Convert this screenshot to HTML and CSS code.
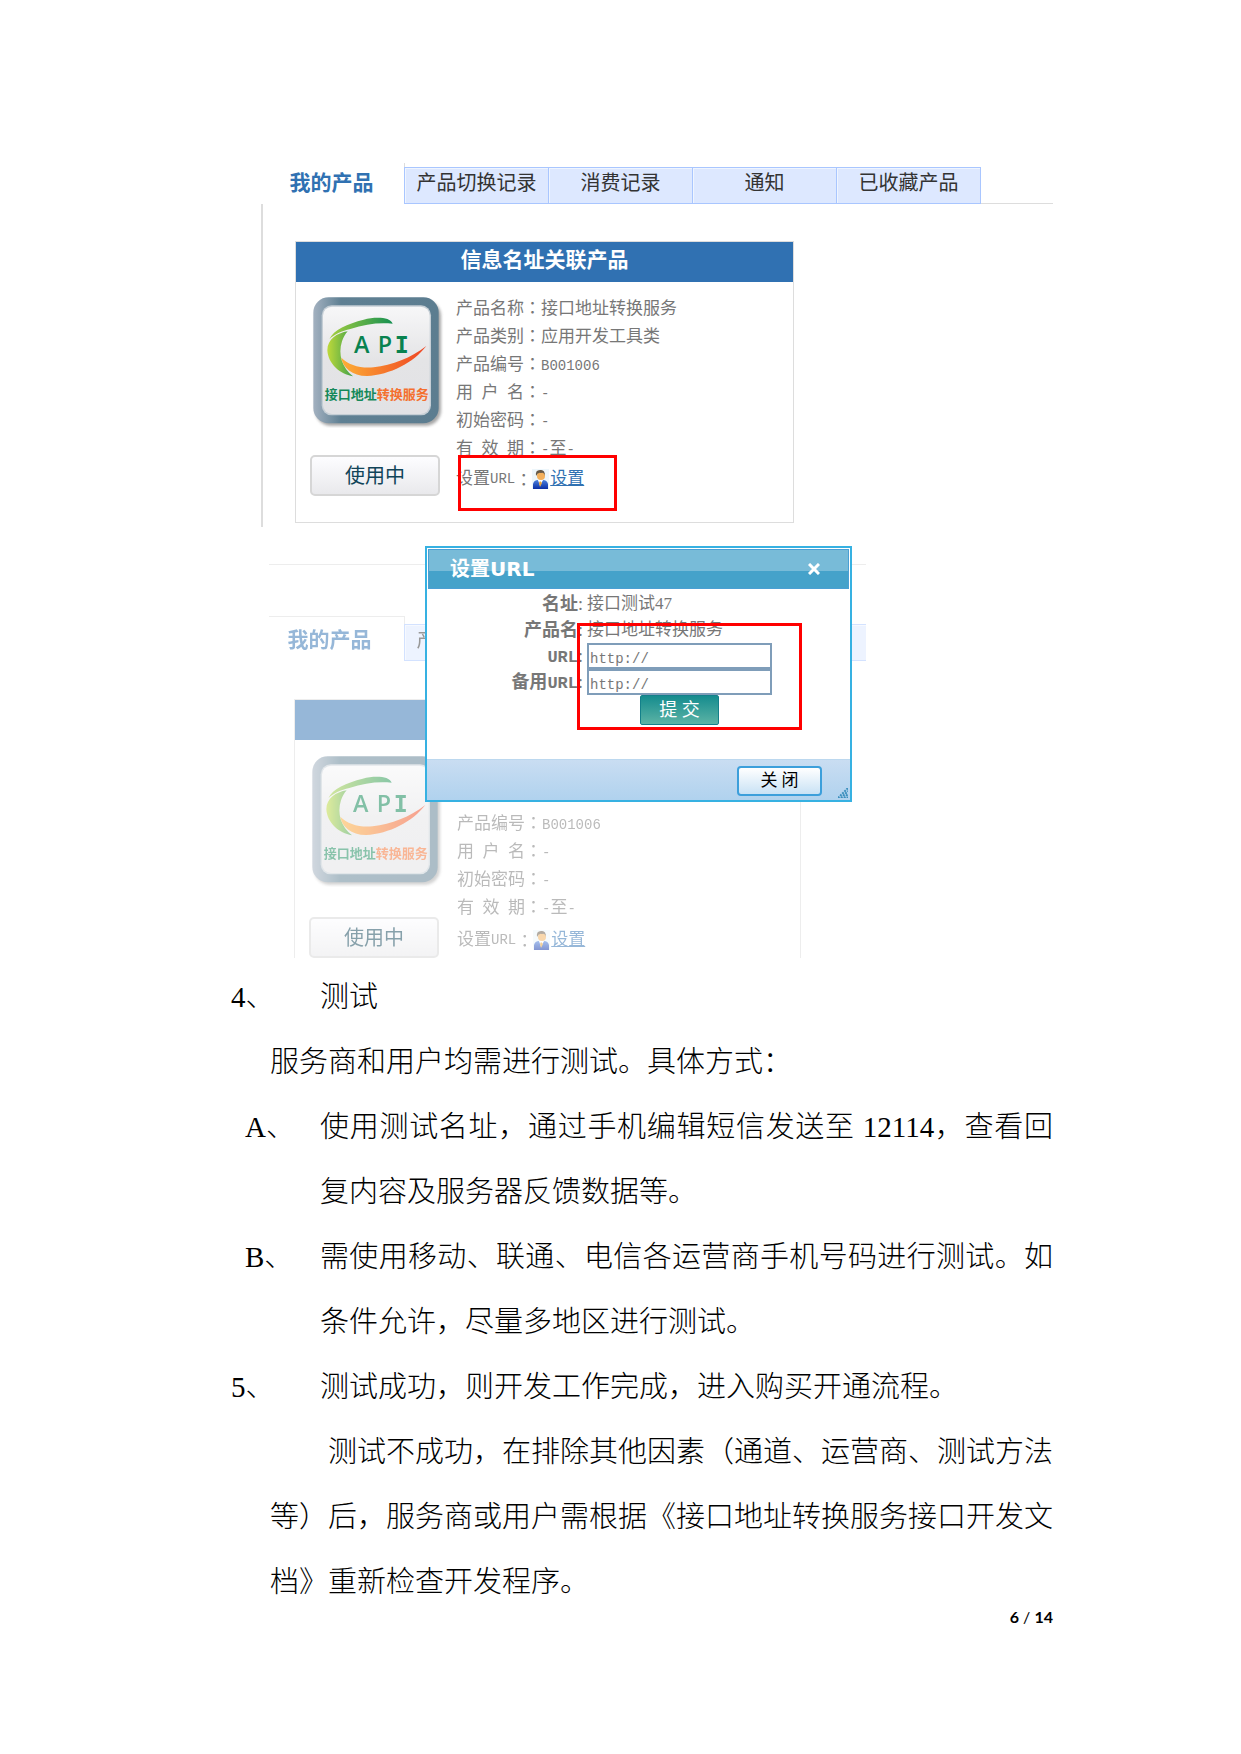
FILE: index.html
```html
<!DOCTYPE html>
<html lang="zh-CN">
<head>
<meta charset="utf-8">
<title>接口地址转换服务</title>
<link rel="stylesheet" href="styles.css">
</head>
<body>
<svg class="defs" aria-hidden="true">
  <defs>
    <linearGradient id="frame" x1="0" y1="0" x2="1" y2="0"><stop offset="0" stop-color="#a3b1c0"/><stop offset=".22" stop-color="#5f8093"/><stop offset="1" stop-color="#5c7d90"/></linearGradient>
    <linearGradient id="face" x1="0" y1="0" x2="0" y2="1"><stop offset="0" stop-color="#f7f7f8"/><stop offset=".5" stop-color="#e4e4e6"/><stop offset="1" stop-color="#e2e2e5"/></linearGradient>
    <linearGradient id="leaf" x1="0" y1="0" x2="1" y2="0"><stop offset="0" stop-color="#a5cf3e"/><stop offset="1" stop-color="#159052"/></linearGradient>
    <linearGradient id="stem" x1="0" y1="0" x2="1" y2="0"><stop offset="0" stop-color="#bfd93a"/><stop offset="1" stop-color="#3ea04a"/></linearGradient>
    <linearGradient id="flame" x1="0" y1="0" x2="1" y2="0"><stop offset="0" stop-color="#fdae35"/><stop offset="1" stop-color="#ee4323"/></linearGradient>
    <linearGradient id="suit" x1="0" y1="0" x2="0" y2="1"><stop offset="0" stop-color="#4b80dd"/><stop offset="1" stop-color="#0a2fa5"/></linearGradient>
    <filter id="shade" x="-10%" y="-10%" width="120%" height="120%"><feGaussianBlur stdDeviation="5"/></filter>
    <filter id="rim" x="-10%" y="-10%" width="120%" height="120%"><feGaussianBlur stdDeviation="2"/></filter>
    <symbol id="api" viewBox="185 45 396 399">
      <rect x="195" y="62" width="377" height="375" rx="46" fill="#777" opacity=".65" filter="url(#shade)"/>
      <rect x="189" y="52" width="376" height="378" rx="46" fill="url(#frame)"/>
      <rect x="214" y="76" width="328" height="330" rx="30" fill="#c5ced5" filter="url(#rim)"/>
      <rect x="218" y="80" width="320" height="322" rx="27" fill="url(#face)"/>
      <path fill="url(#leaf)" d="M427 131C420 111 376 110 340 119C292 131 249 149 237 178C250 163 275 153 300 147C345 132 385 127 427 131Z"/>
      <path fill="url(#stem)" d="M292 154C260 159 231 178 231 211C233 251 269 283 308 289C276 264 262 224 275 184C279 172 284 163 292 154Z"/>
      <path fill="url(#flame)" d="M273 233C277 262 305 288 350 288C420 284 489 249 528 198C482 234 426 255 370 262C330 266 295 255 273 233Z"/>
      <text class="api-letter" x="311" y="219">A</text>
      <text class="api-letter" x="382" y="219">P</text>
      <text class="api-letter api-mono" x="433" y="219">I</text>
      <text class="api-name" x="223" y="357">接口地址<tspan class="api-name-end">转换服务</tspan></text>
    </symbol>
    <symbol id="user" viewBox="0 0 17 20">
      <rect width="17" height="20" fill="#edf6fb"/>
      <path fill="url(#suit)" d="M1 20V15Q2 11 6 11L8 13L11 11Q15 11 16 15V20Z"/>
      <path fill="#fff" d="M6 11L8 17L11 11Z"/>
      <path fill="#e8a336" d="M8 12L7 14L8 18L10 14Z"/>
      <circle cx="9" cy="7" r="4" fill="#f3b05c"/>
      <path fill="#655846" d="M4 7Q3 1 8 1Q13 0 13 7Q12 3 9 4Q6 3 4 7Z"/>
    </symbol>
  </defs>
</svg>
<main class="page">
  <section class="shot">
    <nav class="tabs">
      <a class="tab current" href="#">我的产品</a>
      <a class="tab" href="#">产品切换记录</a>
      <a class="tab" href="#">消费记录</a>
      <a class="tab" href="#">通知</a>
      <a class="tab" href="#">已收藏产品</a>
      <span class="rule"></span>
    </nav>
    <div class="panel">
      <article class="card">
        <h2>信息名址关联产品</h2>
        <div class="card-body">
          <div class="side">
            <svg class="logo" role="img" aria-label="API"><use href="#api"/></svg>
            <button class="state" type="button">使用中</button>
          </div>
          <ul class="info">
            <li>产品名称<span class="colon" lang="zh-TW">：</span>接口地址转换服务</li>
            <li>产品类别<span class="colon" lang="zh-TW">：</span>应用开发工具类</li>
            <li>产品编号<span class="colon" lang="zh-TW">：</span><span class="mono">B001006</span></li>
            <li>用&ensp;户&ensp;名<span class="colon" lang="zh-TW">：</span><span class="mono">-</span></li>
            <li>初始密码<span class="colon" lang="zh-TW">：</span><span class="mono">-</span></li>
            <li>有&ensp;效&ensp;期<span class="colon" lang="zh-TW">：</span><span class="mono">-</span>至<span class="mono">-</span></li>
            <li class="set">设置<span class="mono">URL</span><span class="colon" lang="zh-TW">：</span><svg class="user"><use href="#user"/></svg><a href="#">设置</a></li>
          </ul>
        </div>
      </article>
    </div>
    <span class="mark mark-link"></span>
  </section>

  <section class="shot second">
    <div class="faded">
      <div class="top-rule"></div>
      <nav class="tabs">
        <a class="tab current" href="#">我的产品</a>
        <a class="tab" href="#">产品切换记录</a>
        <a class="tab" href="#">消费记录</a>
        <a class="tab" href="#">通知</a>
        <a class="tab" href="#"></a>
      </nav>
      <div class="panel">
        <article class="card">
          <h2></h2>
          <div class="card-body">
            <div class="side">
              <svg class="logo" role="img" aria-label="API"><use href="#api"/></svg>
              <button class="state" type="button">使用中</button>
            </div>
            <ul class="info">
              <li></li>
              <li></li>
              <li>产品编号<span class="colon" lang="zh-TW">：</span><span class="mono">B001006</span></li>
              <li>用&ensp;户&ensp;名<span class="colon" lang="zh-TW">：</span><span class="mono">-</span></li>
              <li>初始密码<span class="colon" lang="zh-TW">：</span><span class="mono">-</span></li>
              <li>有&ensp;效&ensp;期<span class="colon" lang="zh-TW">：</span><span class="mono">-</span>至<span class="mono">-</span></li>
              <li class="set">设置<span class="mono">URL</span><span class="colon" lang="zh-TW">：</span><svg class="user"><use href="#user"/></svg><a href="#">设置</a></li>
            </ul>
          </div>
        </article>
      </div>
    </div>
    <form class="dialog">
      <header class="dialog-head">
        <h3>设置URL</h3>
        <button class="close" type="button" aria-label="关闭"><svg width="12" height="12" viewBox="0 0 12 12"><path d="M1 1L11 11M11 1L1 11" stroke="#fff" stroke-width="3"/></svg></button>
      </header>
      <div class="fields">
        <span class="label">名址<i>:</i></span><span>接口测试47</span>
        <span class="label">产品名<i>:</i></span><span>接口地址转换服务</span>
        <label class="label" for="url"><span class="mono">URL</span><i>:</i></label><input id="url" type="text" value="http://">
        <label class="label" for="backup">备用<span class="mono">URL</span><i>:</i></label><input id="backup" type="text" value="http://">
        <button class="submit" type="button">提 交</button>
      </div>
      <footer class="dialog-foot">
        <button class="dismiss" type="button">关 闭</button>
        <svg class="grip" viewBox="0 0 10 10"><path d="M0 10L10 0M3 10L10 3M6 10L10 6M9 10L10 9" stroke="#3b8fbd" stroke-width="2" stroke-dasharray="2 1"/></svg>
      </footer>
    </form>
    <span class="mark mark-fields"></span>
  </section>

  <section class="text">
    <div class="item"><span>4、</span><p>测试</p></div>
    <p class="para">服务商和用户均需进行测试。具体方式：</p>
    <div class="item sub"><span>A、</span><p>使用测试名址，通过手机编辑短信发送至 12114，查看回复内容及服务器反馈数据等。</p></div>
    <div class="item sub"><span>B、</span><p>需使用移动、联通、电信各运营商手机号码进行测试。如条件允许，尽量多地区进行测试。</p></div>
    <div class="item"><span>5、</span><p>测试成功，则开发工作完成，进入购买开通流程。</p></div>
    <p class="para indent">测试不成功，在排除其他因素（通道、运营商、测试方法等）后，服务商或用户需根据《接口地址转换服务接口开发文档》重新检查开发程序。</p>
  </section>
  <footer class="page-no"><b>6</b> / <b>14</b></footer>
</main>
</body>
</html>
```
FILE: styles.css
```css
* { box-sizing: border-box; }
body {
  margin: 0;
  background: #fff;
  color: #000;
  font-family: "Liberation Serif", "Noto Sans CJK SC", serif;
}
h2, h3, p, ul { margin: 0; padding: 0; }
ul { list-style: none; }
a { text-decoration: none; }
button { padding: 0; font-family: inherit; }
.defs { position: absolute; width: 0; height: 0; }
.page { padding: 163px 188px 96px 231px; }

/* product panel */
.shot { position: relative; margin-left: 30px; color: #777; font-size: 17px; }
.tabs { display: flex; align-items: flex-end; height: 41px; }
.tab {
  flex: none;
  width: 145px;
  height: 37px;
  margin-left: -1px;
  border: 1px solid #a9c6ff;
  background: #dde8ff;
  box-shadow: inset 1px 1px #eff5ff;
  color: #333;
  font-size: 20px;
  line-height: 31px;
  text-align: center;
}
.tab.current {
  width: 144px;
  height: 41px;
  margin-left: 0;
  padding: 5px 2px 0 0;
  border: 0;
  border-right: 1px solid #ddd;
  background: none;
  box-shadow: none;
  color: #3071b2;
  font-size: 21px;
  font-weight: bold;
}
.rule { flex: 1; align-self: stretch; border-bottom: 1px solid #ddd; }
.panel { padding: 37px 0 4px 32px; border-left: 2px solid #ddd; }
.card { max-width: 499px; border: 1px solid #ddd; }
.card h2 {
  height: 40px;
  background: #3071b2;
  color: #fff;
  font-size: 21px;
  line-height: 36px;
  text-align: center;
}
.card-body { display: flex; gap: 16px; padding: 13px 14px 26px; }
.side { display: flex; flex-direction: column; gap: 27px; width: 130px; }
.logo { width: 132px; height: 133px; margin-left: 2px; }
.api-letter { font: 600 70px "Open Sans", sans-serif; fill: #08824f; }
.api-mono { font-family: "DejaVu Sans Mono", monospace; }
.api-name { font: 700 39px "Noto Sans CJK SC", sans-serif; fill: #15895a; }
.api-name-end { fill: #f4702f; }
.state {
  height: 41px;
  border: 2px solid #d6d6d6;
  border-radius: 5px;
  background: linear-gradient(#fdfdff, #e9e9ec);
  color: #124559;
  font-size: 20px;
  line-height: 32px;
}
.info { line-height: 28px; white-space: nowrap; }
.info li { height: 28px; }
.info .set { display: flex; align-items: center; margin-top: 2px; }
.info a { color: #3071b2; text-decoration: underline; }
.colon { font-family: "Noto Sans CJK TC", sans-serif; line-height: 20px; }
.mono { font-family: "Liberation Mono", monospace; font-size: 14px; }
.user { width: 17px; height: 20px; margin-right: 1px; }

/* red outlines over the controls in question */
.mark { position: absolute; border: 3px solid #f00; }
.mark-link { left: 197px; top: 292px; width: 159px; height: 56px; }
.mark-fields { left: 308px; top: 83px; width: 225px; height: 107px; }

/* panel behind the open dialog */
.second { max-width: 597px; margin: 13px 0 0 38px; overflow: hidden; }
.faded { opacity: 0.5; }
.top-rule { height: 25px; margin-bottom: 51px; border-bottom: 1px solid #ddd; }
.second .tabs { height: 45px; }
.second .tab.current { width: 136px; height: 45px; padding: 8px 14px 0 0; border-top: 1px solid #ddd; }
.second .panel { padding: 38px 0 0 25px; border: 0; }
.second .card { max-width: 507px; border-bottom: 0; }
.second .card-body { gap: 18px; padding: 14px 14px 0; }
.second .side { gap: 30px; }
.second .set { margin-top: 4px; }

/* dialog */
.dialog {
  position: absolute;
  left: 156px;
  top: 6px;
  width: 427px;
  border: 2px solid #36b1e2;
  background: #fff;
}
.dialog-head {
  display: flex;
  align-items: center;
  justify-content: space-between;
  height: 40px;
  margin: 1px;
  padding: 0 28px 0 21px;
  border: 1px solid #4a9fd4;
  background: linear-gradient(#78bbd8 54%, #45a2ca 55%);
  color: #fff;
}
.dialog-head h3 { font-family: "DejaVu Sans", "Noto Sans CJK SC", sans-serif; font-size: 20px; line-height: 38px; }
.close { height: 12px; border: 0; background: none; line-height: 0; }
.fields {
  display: grid;
  grid-template-columns: 156px 185px;
  grid-auto-rows: 26px;
  column-gap: 4px;
  height: 169px;
  padding-top: 1px;
  line-height: 26px;
}
.label { font-size: 18px; font-weight: bold; text-align: right; white-space: nowrap; }
.label .mono { font-size: 17px; }
.label i { font-style: normal; font-weight: normal; }
.fields input {
  width: 100%;
  height: 26px;
  padding: 5px 1px 0;
  border: 2px solid #7f9db9;
  color: #777;
  font: 14px "Liberation Mono", monospace;
}
.submit {
  grid-column: 2;
  width: 79px;
  height: 30px;
  margin-left: 53px;
  border: 1px solid #14808a;
  border-radius: 2px;
  background: linear-gradient(#158c8e, #5cb3a5);
  color: #fff;
  font-size: 18px;
  line-height: 26px;
}
.dialog-foot {
  display: flex;
  align-items: center;
  justify-content: flex-end;
  height: 41px;
  padding: 1px 2px 0 0;
  gap: 16px;
  border-top: 1px solid #bcd8ef;
  background: linear-gradient(#c9ddf2, #b0d2ee);
}
.dismiss {
  width: 85px;
  height: 30px;
  border: 2px solid #3c9fdb;
  border-radius: 4px;
  background: linear-gradient(#fff, #c9e2f5);
  color: #000;
  font-size: 17px;
  line-height: 24px;
}
.grip { align-self: flex-end; width: 10px; height: 10px; margin-bottom: 2px; }

/* document text */
.text {
  padding-top: 7px;
  font-size: 29px;
  font-weight: 300;
  line-height: 65px;
  text-align: justify;
}
.item { display: flex; }
.item span { flex: none; width: 89px; }
.sub span { padding-left: 14px; }
.para { margin-left: 39px; }
.indent { text-indent: 58px; }
.page-no { margin-top: -8px; font: 16px/20px Lato, sans-serif; text-align: right; }
```
